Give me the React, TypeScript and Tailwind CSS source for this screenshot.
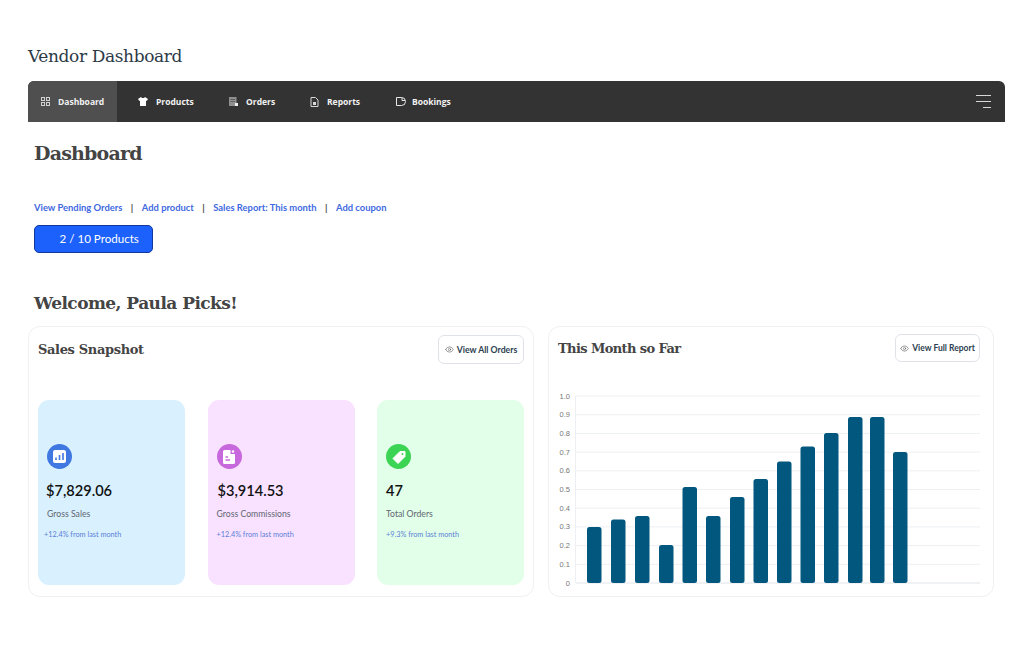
import { Eye } from "lucide-react";

const slab = "font-['DejaVu_Serif',serif]";

function NavIcon({ kind }: { kind: string }) {
  if (kind === "grid")
    return (
      <svg width="9" height="9" viewBox="0 0 9 9" fill="none" stroke="#d0d0d0" strokeWidth="1">
        <rect x="0.5" y="0.5" width="3" height="3" />
        <rect x="5.5" y="0.5" width="3" height="3" />
        <rect x="0.5" y="5.5" width="3" height="3" />
        <rect x="5.5" y="5.5" width="3" height="3" />
      </svg>
    );
  if (kind === "shirt")
    return (
      <svg width="10" height="9" viewBox="0 0 10 9" fill="#fff">
        <path d="M3 0 L4 1 H6 L7 0 L10 2 L8.7 4 L8 3.6 V9 H2 V3.6 L1.3 4 L0 2 Z" />
      </svg>
    );
  if (kind === "orders")
    return (
      <svg width="9" height="9" viewBox="0 0 9 9">
        <rect width="7.5" height="9" fill="#8f8f8f" />
        <path d="M1.5 2.5H6M1.5 4.5H6" stroke="#555" strokeWidth="0.8" />
        <rect x="6" y="6" width="3" height="3" fill="#eee" />
      </svg>
    );
  if (kind === "report")
    return (
      <svg width="9" height="10" viewBox="0 0 9 10" fill="none" stroke="#d8d8d8" strokeWidth="1">
        <path d="M1 .5H5.5L8 3V9.5H1Z" />
        <rect x="3" y="5" width="3" height="3" fill="#d8d8d8" stroke="none" />
      </svg>
    );
  return (
    <svg width="10" height="9" viewBox="0 0 10 9" fill="none" stroke="#e8e8e8" strokeWidth="1">
      <path d="M.5 .5H5.5A4 4 0 0 1 5.5 8.5H.5Z" />
      <path d="M6 .5V3.5H9" />
    </svg>
  );
}

const navItems = [
  { icon: "grid", label: "Dashboard", cls: "w-[89px] pl-[13px] gap-[8px] bg-[#4f4f4f]" },
  { icon: "shirt", label: "Products", cls: "w-[90px] pl-[21px] gap-[8px]" },
  { icon: "orders", label: "Orders", cls: "w-[81px] pl-[22px] gap-[8px]" },
  { icon: "report", label: "Reports", cls: "w-[85px] pl-[22px] gap-[8px]" },
  { icon: "booking", label: "Bookings", cls: "w-[90px] pl-[23px] gap-[6px]" },
];

const stats = [
  { bg: "bg-[#d9f1ff]", ic: "bg-[#3f78e0]", icon: "chart", value: "$7,829.06", label: "Gross Sales", note: "+12.4% from last month", vx: "pl-[8px]", nx: "pl-[6px]" },
  { bg: "bg-[#f9e2ff]", ic: "bg-[#c768dc]", icon: "doc", value: "$3,914.53", label: "Gross Commissions", note: "+12.4% from last month", vx: "pl-[10px]", nx: "pl-[9px]" },
  { bg: "bg-[#e2ffe9]", ic: "bg-[#3cd455]", icon: "tag", value: "47", label: "Total Orders", note: "+9.3% from last month", vx: "pl-[9px]", nx: "pl-[9px]" },
];

function StatIcon({ kind }: { kind: string }) {
  if (kind === "chart")
    return (
      <svg width="13" height="13" viewBox="0 0 13 13">
        <rect width="13" height="13" rx="2" fill="#fff" />
        <path d="M3 10V7.5M6.5 10V5M10 10V3" stroke="#3f78e0" strokeWidth="1.6" />
      </svg>
    );
  if (kind === "doc")
    return (
      <svg width="12" height="14" viewBox="0 0 12 14">
        <path d="M1.5 0H7.5V4H12V12.5A1.5 1.5 0 0 1 10.5 14H1.5A1.5 1.5 0 0 1 0 12.5V1.5A1.5 1.5 0 0 1 1.5 0Z" fill="#fff" />
        <circle cx="10" cy="1.5" r="1.3" fill="#fff" />
        <path d="M2.5 7H5M2.5 10H7" stroke="#c768dc" strokeWidth="1.3" />
      </svg>
    );
  return (
    <svg width="14" height="14" viewBox="0 0 14 14">
      <path d="M8 1.5H13V6.5L6 13.5L1 8.5Z" fill="#fff" stroke="#fff" strokeLinejoin="round" strokeWidth="1" />
      <circle cx="10.5" cy="4" r="1" fill="#3cd455" />
    </svg>
  );
}

const bars: [number, number][] = [
  [587, 527], [611, 519.5], [635, 516], [659, 545], [682.5, 487], [706, 516], [730, 497], [753.5, 479],
  [777, 461.5], [800.5, 446.5], [824, 433], [848, 417], [870, 417], [893, 452],
];
const ticks = ["0", "0.1", "0.2", "0.3", "0.4", "0.5", "0.6", "0.7", "0.8", "0.9", "1.0"];

function Chart() {
  return (
    <svg width="436" height="200" viewBox="549 390 436 200" className="block">
      {ticks.map((t, i) => {
        const y = 583 - i * 18.7;
        return (
          <g key={t}>
            <line x1={576} x2={980} y1={y} y2={y} stroke={i === 0 ? "#dfe3e8" : "#edeff2"} strokeWidth="1" />
            <text x={570} y={y + 2.5} textAnchor="end" fontSize="7.5" fill="#777" fontFamily="Liberation Sans, sans-serif">
              {t}
            </text>
          </g>
        );
      })}
      <line x1={575.5} x2={575.5} y1={396} y2={583} stroke="#edeff2" />
      {bars.map(([x, top]) => (
        <rect key={x} x={x} y={top} width={14.5} height={583 - top} rx="2.5" fill="#02577f" />
      ))}
    </svg>
  );
}

function Sep() {
  return <span className="mx-[8.5px] text-[#444]">|</span>;
}

export default function App() {
  return (
    <div className="w-[1024px] h-[666px] bg-white overflow-hidden pl-[28px] pr-[19px] pt-[44px] font-['Lato',sans-serif]">
      <h1 className={`${slab} text-[17px] tracking-[-0.38px] leading-[24px] text-[#2c3a47] mb-[13px]`}>Vendor Dashboard</h1>

      <nav className="h-[41px] bg-[#333333] rounded-t-[6px] flex items-stretch overflow-hidden font-['Open_Sans',sans-serif] text-[8.5px] font-bold text-[#f2f2f2]">
        {navItems.map((n) => (
          <div key={n.label} className={`flex items-center ${n.cls}`}>
            <NavIcon kind={n.icon} />
            <span className="pt-[1px]">{n.label}</span>
          </div>
        ))}
        <div className="ml-auto flex flex-col items-end justify-center gap-[4.5px] pr-[14px]">
          <span className="block w-[15px] h-[1.5px] bg-[#d8d8d8]" />
          <span className="block w-[15px] h-[1.5px] bg-[#d8d8d8]" />
          <span className="block w-[8px] h-[1.5px] bg-[#d8d8d8]" />
        </div>
      </nav>

      <div className="pl-[6px]">
        <h2 className={`${slab} text-[19px] tracking-[-0.8px] leading-[26px] font-bold text-[#444444] mt-[18px]`}>Dashboard</h2>

        <div className="mt-[35px] flex items-center text-[9.4px] font-bold leading-[14px] text-[#4169e1]">
          <span>View Pending Orders</span>
          <Sep />
          <span>Add product</span>
          <Sep />
          <span>Sales Report: This month</span>
          <Sep />
          <span>Add coupon</span>
        </div>

        <div className="mt-[10px] w-[118.5px] h-[28px] rounded-[5px] bg-[#1c61fb] border border-[#12389c] text-white text-[11.6px] flex items-center pl-[24.5px]">
          2 / 10 Products
        </div>

        <h2 className={`${slab} text-[17px] tracking-[-0.55px] leading-[24px] font-bold text-[#444444] mt-[38px]`}>Welcome, Paula Picks!</h2>
      </div>

      <div className="mt-[11px] flex gap-[14px]">
        <section className="w-[506px] h-[271px] rounded-[12px] border border-[#eef0f2] px-[9px] pt-[8px]">
          <div className="flex justify-between items-start h-[65px]">
            <h3 className={`${slab} text-[13px] tracking-[-0.35px] leading-[30px] font-bold text-[#444444]`}>Sales Snapshot</h3>
            <div className="w-[86px] h-[29px] rounded-[6px] border border-[#dfe3e8] flex items-center justify-center gap-[3px] text-[8.7px] font-bold text-[#2c3e50]">
              <Eye size={9} strokeWidth={1.5} className="text-[#555]" />
              <span>View All Orders</span>
            </div>
          </div>
          <div className="flex gap-[22.5px]">
            {stats.map((s) => (
              <div key={s.label} className={`w-[147px] h-[185px] rounded-[11px] ${s.bg} flex flex-col pt-[44px]`}>
                <div className="pl-[9px]">
                  <div className={`w-[25px] h-[25px] rounded-full ${s.ic} flex items-center justify-center`}>
                    <StatIcon kind={s.icon} />
                  </div>
                </div>
                <div className={`${s.vx} mt-[11px] text-[14.6px] leading-[22px] font-semibold text-[#111]`}>{s.value}</div>
                <div className="pl-[9px] mt-[6px] text-[8.7px] leading-[12px] text-[#5f6670]">{s.label}</div>
                <div className={`${s.nx} mt-[9px] text-[7.3px] leading-[12px] text-[#5b7fd6]`}>{s.note}</div>
              </div>
            ))}
          </div>
        </section>

        <section className="w-[446px] h-[271px] rounded-[12px] border border-[#eef0f2] pt-[7px]">
          <div className="flex justify-between items-start h-[56px] pl-[9px] pr-[13px]">
            <h3 className={`${slab} text-[13px] tracking-[-0.6px] leading-[30px] font-bold text-[#444444]`}>This Month so Far</h3>
            <div className="w-[85px] h-[28px] rounded-[6px] border border-[#dfe3e8] flex items-center justify-center gap-[3px] text-[8.5px] font-bold text-[#2c3e50]">
              <Eye size={9} strokeWidth={1.5} className="text-[#555]" />
              <span>View Full Report</span>
            </div>
          </div>
          <Chart />
        </section>
      </div>
    </div>
  );
}
